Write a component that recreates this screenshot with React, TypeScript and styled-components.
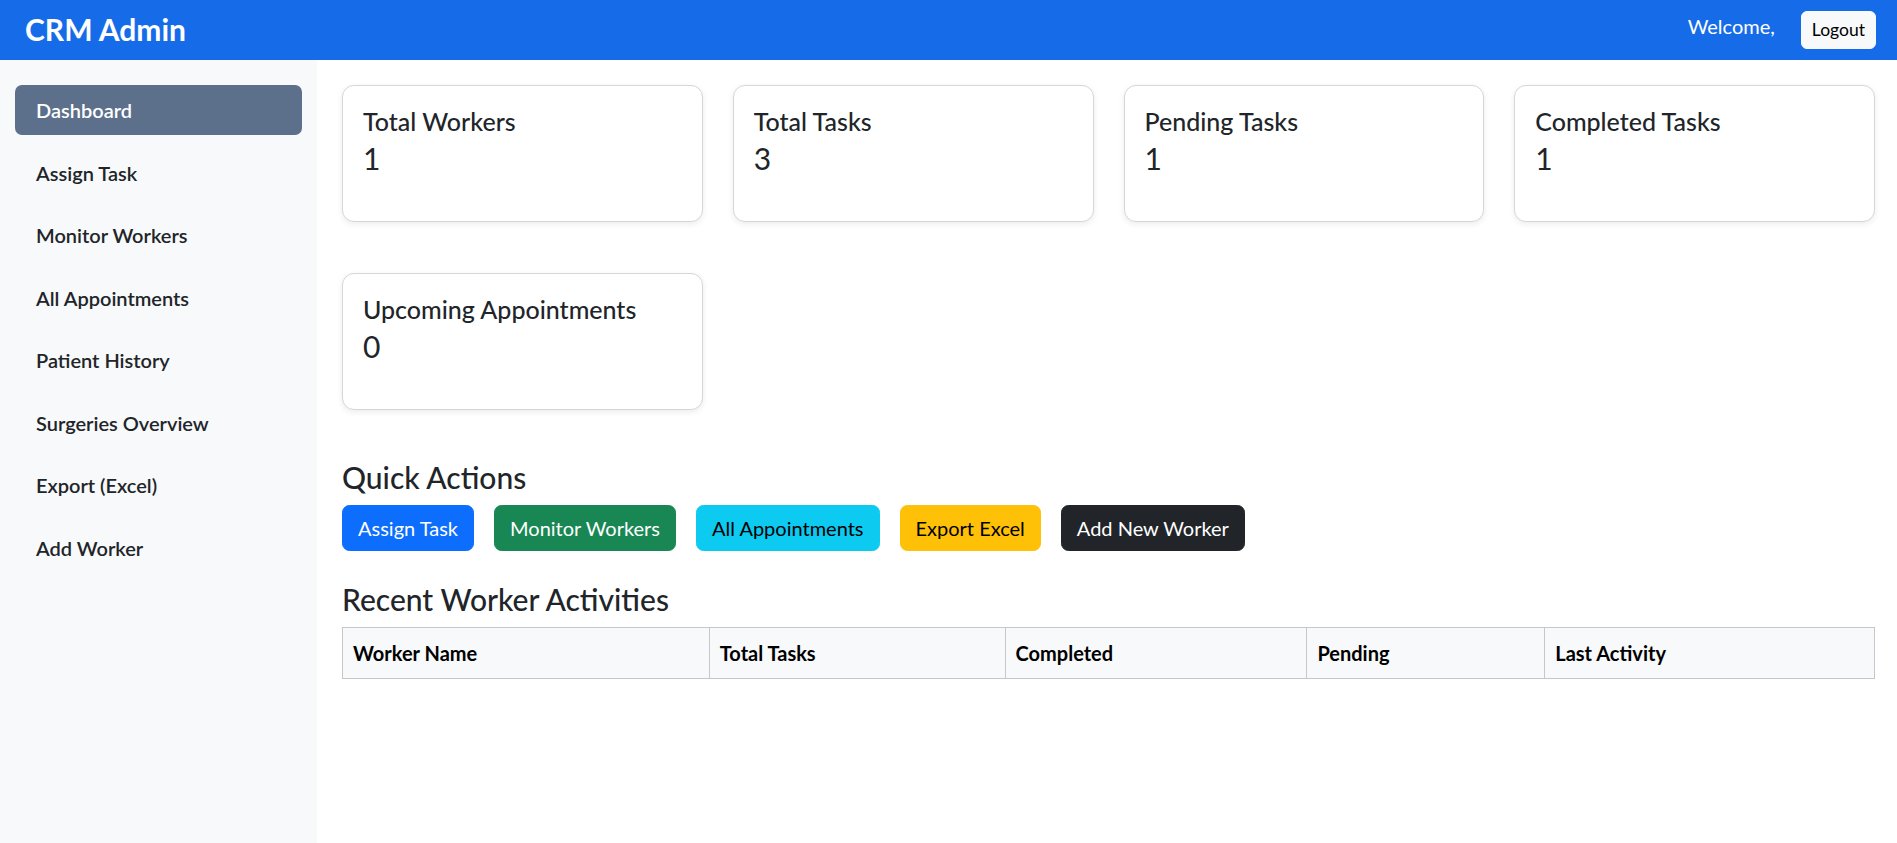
import React from "react";
import styled, { createGlobalStyle } from "styled-components";

const GlobalStyle = createGlobalStyle`
  * { box-sizing: border-box; }
  html, body { margin: 0; padding: 0; background: #ffffff; }
  body {
    font-family: Lato, "Open Sans", "Liberation Sans", sans-serif;
    color: #212529;
    font-size: 20px;
    line-height: 1.5;
  }
`;

const Navbar = styled.header`
  height: 60px;
  background: #166ce8;
  display: flex;
  align-items: center;
  justify-content: space-between;
  padding: 0 21px 0 25px;
`;

const Brand = styled.div`
  color: #ffffff;
  font-size: 30px;
  font-weight: 700;
  line-height: 36px;
  padding-bottom: 2px;
`;

const NavRight = styled.div`
  display: flex;
  align-items: center;
  gap: 26px;
`;

const Welcome = styled.span`
  color: #ffffff;
  font-size: 20px;
  line-height: 30px;
  padding-bottom: 8px;
`;

const LogoutButton = styled.button`
  font-family: inherit;
  font-size: 17.5px;
  line-height: 26px;
  padding: 5px 10px;
  background: #f8f9fa;
  color: #000000;
  border: 1px solid #f8f9fa;
  border-radius: 6px;
  cursor: pointer;
`;

const Layout = styled.div`
  display: flex;
  min-height: calc(100vh - 60px);
`;

const Sidebar = styled.nav`
  width: 317px;
  flex: 0 0 317px;
  background: #f8f9fa;
  padding: 25px 15px;
  display: flex;
  flex-direction: column;
  gap: 12.5px;
`;

const NavItem = styled.a<{ $active?: boolean }>`
  display: flex;
  align-items: center;
  height: 50px;
  padding: 0 21px;
  border-radius: 7px;
  font-size: 20px;
  font-weight: 600;
  text-decoration: none;
  color: ${(p) => (p.$active ? "#ffffff" : "#212529")};
  background: ${(p) => (p.$active ? "#5c708c" : "transparent")};
`;

const Main = styled.main`
  flex: 1;
  padding: 25px 22px 40px 25px;
`;

const CardGrid = styled.div`
  display: grid;
  grid-template-columns: repeat(4, 1fr);
  column-gap: 30px;
  row-gap: 51px;
`;

const Card = styled.div`
  background: #ffffff;
  border: 1px solid #d6d6d8;
  border-radius: 12px;
  box-shadow: 0 2px 6px rgba(0, 0, 0, 0.08);
  padding: 20px;
`;

const CardTitle = styled.h5`
  margin: 0;
  font-size: 25px;
  font-weight: 500;
  line-height: 30px;
`;

const CardValue = styled.p`
  margin: 0 0 20px;
  font-size: 30px;
  font-weight: 400;
  line-height: 45px;
`;

const SectionTitle = styled.h4<{ $top: number }>`
  margin: ${(p) => p.$top}px 0 10px;
  font-size: 30px;
  font-weight: 500;
  line-height: 36px;
`;

const ButtonRow = styled.div`
  display: flex;
  gap: 20px;
`;

const variants: Record<string, { bg: string; fg: string }> = {
  primary: { bg: "#0d6efd", fg: "#ffffff" },
  success: { bg: "#198754", fg: "#ffffff" },
  info: { bg: "#0dcaf0", fg: "#000000" },
  warning: { bg: "#ffc107", fg: "#000000" },
  dark: { bg: "#212529", fg: "#ffffff" },
};

const ActionButton = styled.button<{ $variant: string }>`
  font-family: inherit;
  font-size: 20px;
  line-height: 30px;
  padding: 7px 15px;
  border-radius: 7.5px;
  border: 1px solid ${(p) => variants[p.$variant].bg};
  background: ${(p) => variants[p.$variant].bg};
  color: ${(p) => variants[p.$variant].fg};
  cursor: pointer;
`;

const Table = styled.table`
  width: 100%;
  border-collapse: collapse;
  table-layout: fixed;
`;

const Th = styled.th`
  background: #f8f9fa;
  border: 1px solid #c6c7c8;
  padding: 10px;
  text-align: left;
  font-size: 20px;
  font-weight: 700;
  line-height: 30px;
  color: #000000;
`;

const stats = [
  { title: "Total Workers", value: 1 },
  { title: "Total Tasks", value: 3 },
  { title: "Pending Tasks", value: 1 },
  { title: "Completed Tasks", value: 1 },
  { title: "Upcoming Appointments", value: 0 },
];

const navItems = [
  "Dashboard",
  "Assign Task",
  "Monitor Workers",
  "All Appointments",
  "Patient History",
  "Surgeries Overview",
  "Export (Excel)",
  "Add Worker",
];

const actions = [
  { label: "Assign Task", v: "primary" },
  { label: "Monitor Workers", v: "success" },
  { label: "All Appointments", v: "info" },
  { label: "Export Excel", v: "warning" },
  { label: "Add New Worker", v: "dark" },
];

const columns = [
  { label: "Worker Name", w: 23.94 },
  { label: "Total Tasks", w: 19.31 },
  { label: "Completed", w: 19.7 },
  { label: "Pending", w: 15.53 },
  { label: "Last Activity", w: 21.52 },
];

export default function App() {
  return (
    <>
      <GlobalStyle />
      <Navbar>
        <Brand>CRM Admin</Brand>
        <NavRight>
          <Welcome>Welcome,</Welcome>
          <LogoutButton>Logout</LogoutButton>
        </NavRight>
      </Navbar>
      <Layout>
        <Sidebar>
          {navItems.map((n, i) => (
            <NavItem key={n} href="#" $active={i === 0}>
              {n}
            </NavItem>
          ))}
        </Sidebar>
        <Main>
          <CardGrid>
            {stats.map((s) => (
              <Card key={s.title}>
                <CardTitle>{s.title}</CardTitle>
                <CardValue>{s.value}</CardValue>
              </Card>
            ))}
          </CardGrid>
          <SectionTitle $top={49}>Quick Actions</SectionTitle>
          <ButtonRow>
            {actions.map((a) => (
              <ActionButton key={a.label} $variant={a.v}>
                {a.label}
              </ActionButton>
            ))}
          </ButtonRow>
          <SectionTitle $top={30}>Recent Worker Activities</SectionTitle>
          <Table>
            <colgroup>
              {columns.map((c) => (
                <col key={c.label} style={{ width: `${c.w}%` }} />
              ))}
            </colgroup>
            <thead>
              <tr>
                {columns.map((c) => (
                  <Th key={c.label}>{c.label}</Th>
                ))}
              </tr>
            </thead>
            <tbody />
          </Table>
        </Main>
      </Layout>
    </>
  );
}
